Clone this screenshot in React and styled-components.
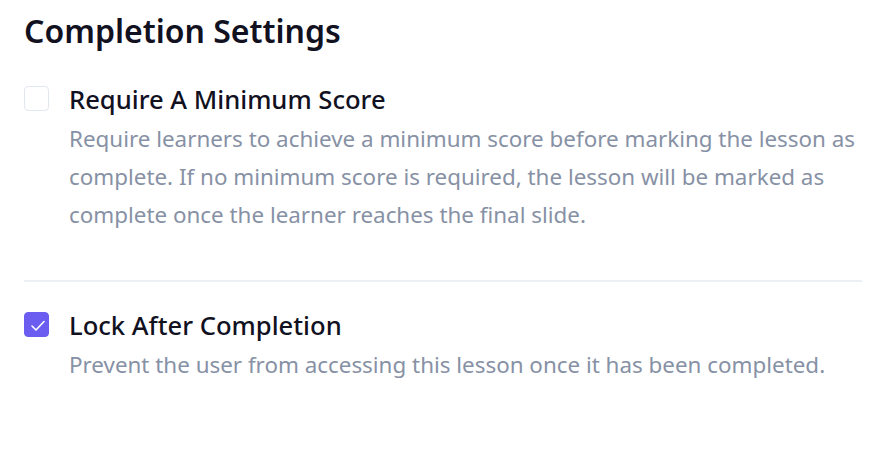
import styled, { createGlobalStyle } from 'styled-components';

const GlobalStyle = createGlobalStyle`
	body {
		margin: 0;
		background: #ffffff;
		font-family: 'Noto Sans', 'Liberation Sans', sans-serif;
	}
`;

const Page = styled.div`
	padding: 9px 24px 0 24px;
	display: flex;
	flex-direction: column;
`;

const Title = styled.h2`
	margin: 0;
	font-size: 32px;
	line-height: 44px;
	font-weight: 600;
	color: #11111f;
`;

const Option = styled.div`
	display: flex;
	flex-direction: row;
	align-items: flex-start;
	gap: 20px;
	padding: ${ props => props.first ? '31px 0 46px' : '28px 0 0' };
`;

const Box = styled.span`
	flex: none;
	width: 25px;
	height: 25px;
	box-sizing: border-box;
	border-radius: 4px;
	margin-top: 2px;
	display: flex;
	align-items: center;
	justify-content: center;
	background: ${ props => props.checked ? '#6a5df0' : '#ffffff' };
	border: 1px solid ${ props => props.checked ? '#6a5df0' : '#e2e6ee' };
`;

const Text = styled.div`
	display: flex;
	flex-direction: column;
`;

const Label = styled.div`
	font-size: 25.6px;
	line-height: 32px;
	font-weight: 500;
	color: #11111f;
`;

const Description = styled.p`
	margin: 4px 0 0;
	font-size: 22.4px;
	line-height: 38px;
	color: #8791a5;
`;

const Divider = styled.hr`
	margin: 0;
	border: none;
	border-top: 2px solid #eceff3;
`;

const Check = () => (
	<svg width="23" height="23" viewBox="0 0 23 23" fill="none">
		<path d="M7 13 L11 17 L19 8.5" stroke="#ffffff" strokeWidth="1.6" strokeLinecap="round" strokeLinejoin="round" />
	</svg>
);

const Setting = ({ checked, label, description, first }) => {
	return (
		<Option first={ first }>
			<Box checked={ checked }>{ checked ? <Check /> : undefined }</Box>
			<Text>
				<Label>{ label }</Label>
				<Description>{ description }</Description>
			</Text>
		</Option>
	)
};

export default function App() {
	return (
		<Page>
			<GlobalStyle />
			<Title>Completion Settings</Title>
			<Setting
				first
				label="Require A Minimum Score"
				description="Require learners to achieve a minimum score before marking the lesson as complete. If no minimum score is required, the lesson will be marked as complete once the learner reaches the final slide."
			/>
			<Divider />
			<Setting
				checked
				label="Lock After Completion"
				description="Prevent the user from accessing this lesson once it has been completed."
			/>
		</Page>
	);
}
